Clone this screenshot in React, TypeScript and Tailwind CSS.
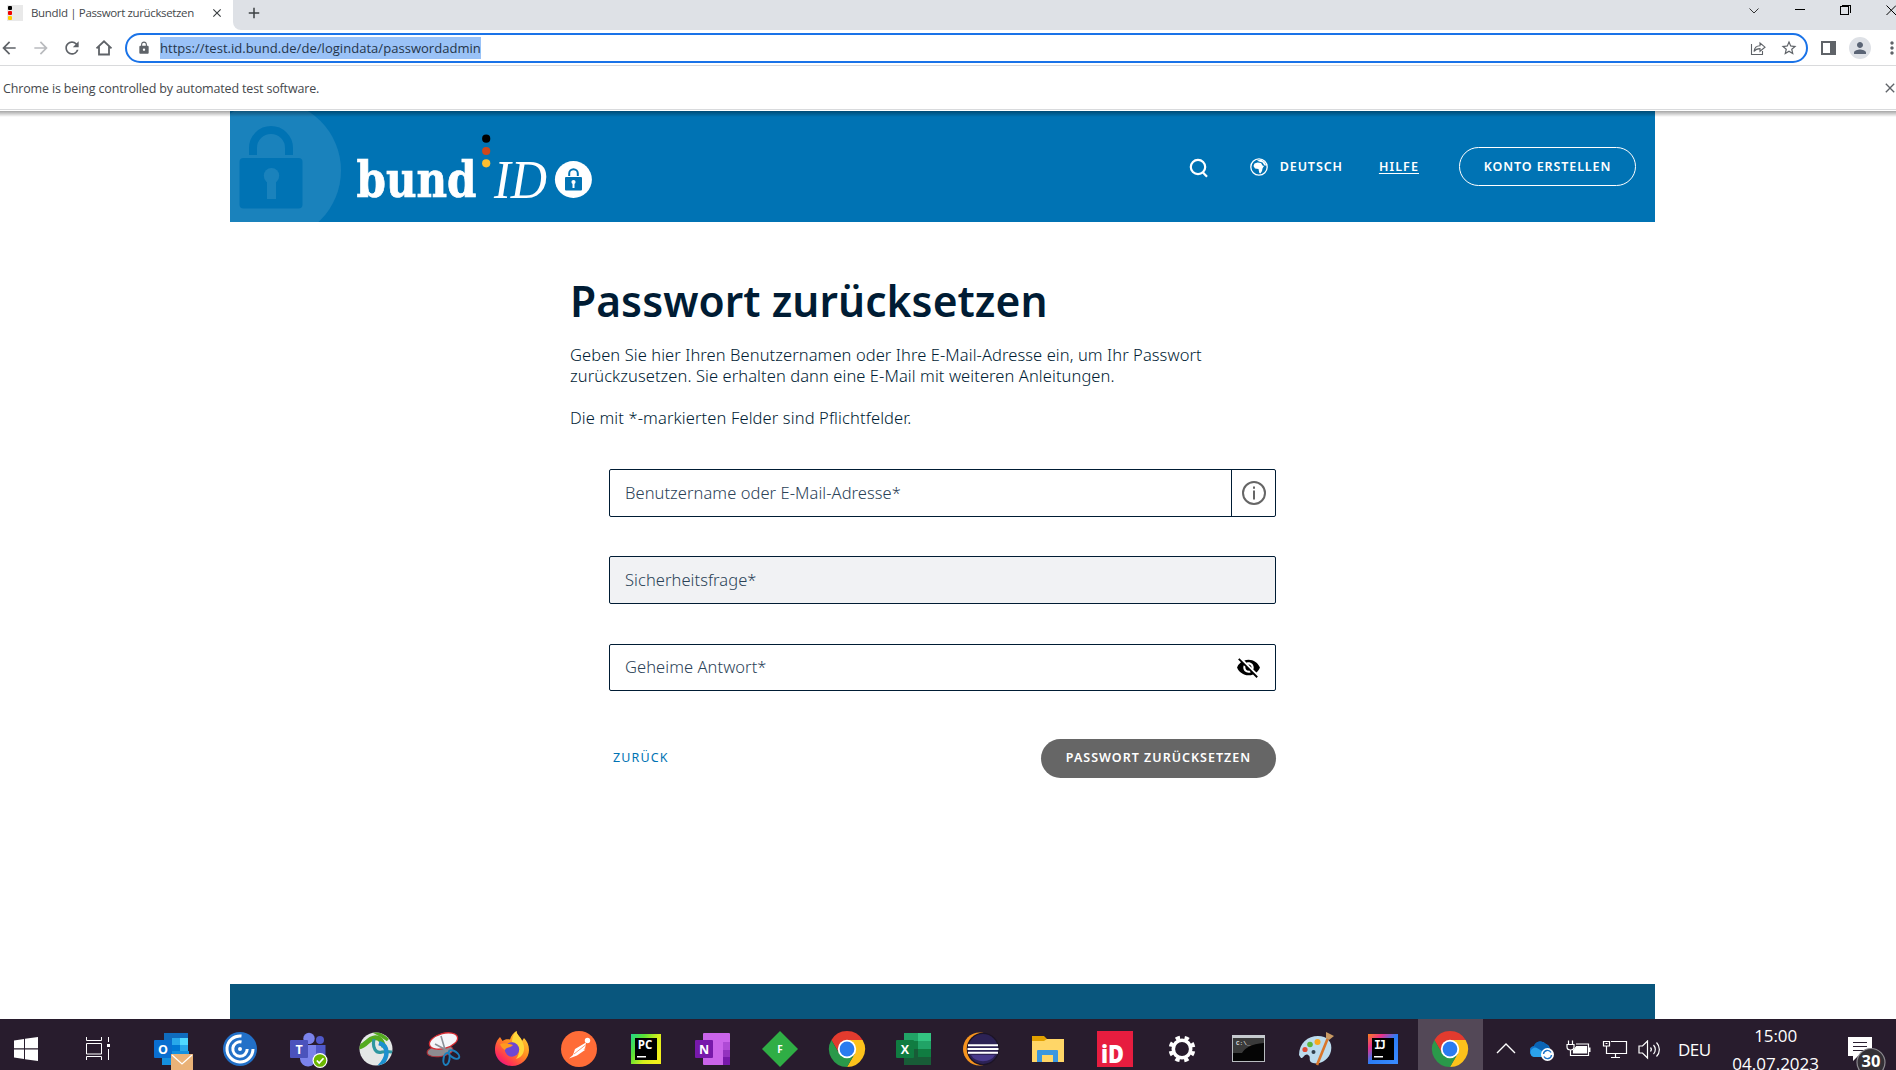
import type { ReactNode } from "react";
import {
  MdArrowBack,
  MdArrowForward,
  MdRefresh,
  MdLock,
  MdStarBorder,
  MdVisibilityOff,
  MdPerson,
  MdClose,
  MdAdd,
  MdMoreVert,
} from "react-icons/md";

function TabStrip() {
  return (
    <div className="flex h-[30px] shrink-0">
      <div className="flex w-[233px] items-center pb-1">
        <svg className="ml-[7px]" width="16" height="16" viewBox="0 0 16 16">
          <rect width="16" height="16" fill="#e9e9e9" />
          <rect x="1" y="1" width="4" height="4" rx="1" fill="#000" />
          <rect x="1" y="6" width="4" height="4" rx="1" fill="#f00000" />
          <rect x="1" y="11" width="4" height="4" rx="1" fill="#fc0" />
        </svg>
        <span className="ml-2 w-[164px] text-[11.5px] tracking-[-0.36px] whitespace-nowrap text-[#45484c]">
          BundId | Passwort zurücksetzen
        </span>
        <MdClose className="ml-[15px] text-[#3c4043]" size={14} />
      </div>
      <div className="flex flex-1 items-center justify-between rounded-bl-lg bg-[#dee1e6] pb-1">
        <MdAdd className="ml-[12px] text-[#3c4043]" size={18} />
        <svg width="150" height="20" viewBox="0 0 150 20" fill="none" stroke="#000" shapeRendering="crispEdges">
          <path d="M3.5 5.5 L8 10 L12.5 5.5" strokeWidth="1" shapeRendering="auto" stroke="#333" />
          <path d="M49 6.5 H59" />
          <rect x="94.5" y="3.5" width="8" height="8" />
          <path d="M96 2.5 H104.5 V10" />
          <path d="M140.500 2.500 L150 12 M140.500 12 L150 2.500" shapeRendering="auto" />
        </svg>
      </div>
    </div>
  );
}

function Toolbar() {
  return (
    <div className="flex h-9 shrink-0 items-center border-b border-[#d9dadc] pt-px text-[#5f6368]">
      <MdArrowBack size={20} className="-ml-[1px] shrink-0" />
      <MdArrowForward size={20} className="ml-[12px] shrink-0 text-[#b9bbbe]" />
      <MdRefresh size={20} className="ml-[11px] shrink-0" />
      <svg className="ml-[13px] shrink-0" width="18" height="18" viewBox="0 0 18 18" fill="none" stroke="currentColor" strokeWidth="1.8">
        <path d="M1.500 9.300 L9 2.300 L16.500 9.300 M4 7.500 V15.500 H14 V7.500" />
      </svg>
      <div className="ml-[12px] flex h-[30px] w-[1683px] shrink-0 items-center rounded-full border-2 border-[#1a73e8] bg-white">
        <MdLock size={14} className="ml-[10px]" />
        <span className="ml-[9px] h-[22px] w-[321px] bg-[#9ac2f7] text-[13px] leading-[22px] tracking-[0.04px] whitespace-nowrap text-[#24354a]">
          https://test.id.bund.de/de/logindata/passwordadmin
        </span>
        <div className="flex-1" />
        <svg width="16" height="16" viewBox="0 0 16 16" fill="none" stroke="currentColor" strokeWidth="1.1">
          <path d="M1.500 4 V14.500 H12.500 V11" />
          <path d="M4 11.500 C4.500 7.500 6.500 5.800 10 5.800 V3 L15 7.200 L10 11.300 V8.600 C7 8.600 5.300 9.500 4 11.500 Z" />
        </svg>
        <MdStarBorder size={18} className="mr-[8px] ml-[14px]" />
      </div>
      <svg className="ml-[13px] shrink-0" width="15" height="14" viewBox="0 0 15 14">
        <rect x="1" y="1" width="13" height="12" fill="none" stroke="currentColor" strokeWidth="2" />
        <rect x="9" y="2" width="4" height="10" fill="currentColor" />
      </svg>
      <div className="ml-[13px] flex size-[22px] shrink-0 items-center justify-center rounded-full bg-[#dee1e6]">
        <MdPerson size={18} className="text-[#5a6475]" />
      </div>
      <MdMoreVert size={20} className="ml-[11px] shrink-0" />
    </div>
  );
}

function InfoBar() {
  return (
    <div className="mb-px flex h-[44px] shrink-0 items-center justify-between border-b border-[#d9dadc] pl-[3px]">
      <span className="pt-[3px] text-[12.5px] tracking-[-0.15px] text-[#45484c]">
        Chrome is being controlled by automated test software.
      </span>
      <MdClose size={16} className="-mr-[2px] text-[#5f6368]" />
    </div>
  );
}

function Logo() {
  return (
    <svg width="400" height="111" viewBox="0 0 400 111" className="block">
      <circle cx="41" cy="59.500" r="70" fill="#1a82bc" />
      <path d="M23 44 V37 a18 18 0 0 1 36 0 V44" fill="none" stroke="#0073b4" strokeWidth="8" />
      <rect x="9.500" y="47" width="63" height="50.500" rx="4" fill="#0073b4" />
      <circle cx="41.500" cy="64.700" r="7.700" fill="#1a82bc" />
      <rect x="37" y="68" width="9" height="20" fill="#1a82bc" />
      <text
        x="126.500"
        y="86"
        fontSize="50.5"
        fontWeight="700"
        fontStretch="condensed"
        fontFamily="'DejaVu Serif Condensed', 'DejaVu Serif', serif"
        textLength="120"
        lengthAdjust="spacingAndGlyphs"
        fill="#fff"
        stroke="#fff"
        strokeWidth="0.7"
      >
        bund
      </text>
      <text
        x="264"
        y="86.500"
        fontSize="54"
        fontWeight="400"
        fontStyle="italic"
        fontFamily="'Liberation Serif', serif"
        textLength="53"
        lengthAdjust="spacingAndGlyphs"
        fill="#fff"
      >
        ID
      </text>
      <circle cx="256.200" cy="27.700" r="4.100" fill="#000" />
      <circle cx="256.200" cy="40" r="4.100" fill="#d0471a" />
      <circle cx="256.200" cy="52.300" r="4.100" fill="#fdbf32" />
      <circle cx="343.400" cy="68.500" r="18.500" fill="#fff" />
      <path d="M339.200 65 V62.500 a4.300 4.300 0 0 1 8.600 0 V65" fill="none" stroke="#0073b4" strokeWidth="2" />
      <rect x="335" y="66" width="17" height="13.500" rx="1" fill="#0073b4" />
      <circle cx="343.500" cy="71" r="2.100" fill="#fff" />
      <rect x="342.500" y="71" width="2" height="6" fill="#fff" />
    </svg>
  );
}

function SiteHeader() {
  return (
    <header className="ml-[230px] flex h-[111px] w-[1425px] shrink-0 bg-[#0073b4] font-['Noto_Sans',sans-serif] text-[12.5px] font-semibold text-white">
      <Logo />
      <div className="flex flex-1 items-center justify-end pr-[19px]">
        <svg width="20" height="20" viewBox="0 0 20 20" fill="none" stroke="#fff" strokeWidth="2.2" className="mt-[3px] mr-[41px]">
          <circle cx="9" cy="9" r="7.200" />
          <path d="M13.500 14 L18 18.800" />
        </svg>
        <svg width="18" height="18" viewBox="0 0 18 18" className="mr-[12px]">
          <circle cx="9" cy="9" r="8.200" fill="none" stroke="#fff" strokeWidth="1.3" />
          <path d="M4.500 5.500 L7.500 4.500 L11 5 L12.500 7.500 L14 8 L12.500 10.500 L12 13 L10.500 15.500 L9.300 15 L8.500 11 L5 10.500 L3.500 8 Z" fill="#fff" />
          <path d="M7 2.500 L11 1.500 L14.500 4 L16.300 7.500 L14.500 7.500 L12.500 4.500 L9 3.600 Z" fill="#fff" />
        </svg>
        <span className="mt-[2px] mr-[36px] tracking-[0.9px]">DEUTSCH</span>
        <span className="mt-[2px] mr-[40px] tracking-[1.1px] underline underline-offset-2">HILFE</span>
        <button className="flex h-[39px] w-[177px] items-center justify-center rounded-full border border-white">
          <span className="mt-[2px] tracking-[0.9px]">KONTO ERSTELLEN</span>
        </button>
      </div>
    </header>
  );
}

function Field({ label, className, children }: { label: string; className: string; children?: ReactNode }) {
  return (
    <div className={"flex h-12 w-[667px] items-center justify-between rounded-[2px] border border-[#001c34] " + className}>
      <span className="ml-[15px] text-[16.5px] font-light tracking-[0.06px] text-[#2b4257]">{label}</span>
      {children}
    </div>
  );
}

function PasswordForm() {
  return (
    <main className="ml-[570px] flex w-[706px] flex-1 flex-col font-['Noto_Sans',sans-serif] text-[#001c34]">
      <h1 className="mt-[49px] h-[60px] text-[42.5px] leading-[60px] font-semibold tracking-[0.06px] whitespace-nowrap">
        Passwort zurücksetzen
      </h1>
      <p className="mt-[13px] text-[16.5px] leading-[21px] font-light tracking-[0.08px]">
        Geben Sie hier Ihren Benutzernamen oder Ihre E-Mail-Adresse ein, um Ihr Passwort
        <br />
        zurückzusetzen. Sie erhalten dann eine E-Mail mit weiteren Anleitungen.
      </p>
      <p className="mt-[21px] text-[16.5px] leading-[21px] font-light tracking-[0.12px]">
        Die mit *-markierten Felder sind Pflichtfelder.
      </p>
      <div className="mt-[41px] ml-[39px] flex flex-col">
        <Field label="Benutzername oder E-Mail-Adresse*" className="bg-white">
          <div className="flex h-full w-[44px] items-center justify-center border-l border-[#001c34]">
            <svg width="24" height="24" viewBox="0 0 24 24" fill="none" stroke="#666" strokeWidth="2">
              <circle cx="12" cy="12" r="11" />
              <path d="M12 9.500 V18.500 M12 5.500 V7.800" />
            </svg>
          </div>
        </Field>
        <Field label="Sicherheitsfrage*" className="mt-[39px] bg-[#f1f2f4]" />
        <Field label="Geheime Antwort*" className="mt-[40px] h-[47px] bg-white">
          <MdVisibilityOff size={25} className="mr-[14px] text-black" />
        </Field>
        <div className="mt-[48px] flex items-center justify-between text-[12.5px]">
          <span className="ml-1 tracking-[1.15px] text-[#0073b4]">ZURÜCK</span>
          <button className="flex h-[39px] w-[235px] items-center justify-center rounded-full bg-[#666] font-semibold text-white">
            <span className="tracking-[1px]">PASSWORT ZURÜCKSETZEN</span>
          </button>
        </div>
      </div>
    </main>
  );
}

function Chrome() {
  return (
    <g>
      <path d="M2.400 9 A18 18 0 0 1 33.600 9 L18 9 L10.200 22.500 Z" fill="#e33b2e" />
      <path d="M33.600 9 A18 18 0 0 1 18 36 L25.800 22.500 L18 9 Z" fill="#fcc21b" />
      <path d="M18 36 A18 18 0 0 1 2.400 9 L10.200 22.500 L25.800 22.500 Z" fill="#2a994a" />
      <circle cx="18" cy="18" r="9.200" fill="#fff" />
      <circle cx="18" cy="18" r="7.400" fill="#2a7bf0" />
    </g>
  );
}

const label = { fontFamily: "'Open Sans', sans-serif", fontWeight: 700, fill: "#fff", textAnchor: "middle" as const };

const apps: { name: string; art: ReactNode }[] = [
  {
    name: "Outlook",
    art: (
      <g>
        <rect x="10" y="2" width="24" height="18" fill="#0f6cbd" />
        <rect x="18" y="7" width="8" height="7" fill="#28a8ea" />
        <rect x="26" y="7" width="8" height="7" fill="#50d9ff" />
        <rect x="18" y="14" width="8" height="7" fill="#0078d4" />
        <rect x="26" y="14" width="8" height="7" fill="#28a8ea" />
        <path d="M8 20 H35 V34 H8 Z" fill="#1490df" />
        <rect x="0" y="9" width="18" height="18" rx="1" fill="#0a6fd0" />
        <text {...label} x="9" y="22.500" fontSize="12.5">O</text>
        <rect x="17" y="23" width="22" height="16" fill="#eab277" />
        <path d="M18 24 L28 33 L38 24" fill="none" stroke="#fff" strokeWidth="1.3" />
      </g>
    ),
  },
  {
    name: "Workspace",
    art: (
      <g fill="none" stroke="#fff" strokeWidth="3">
        <circle cx="18" cy="18" r="17" fill="#2270c8" stroke="none" />
        <path d="M19.500 5 A13 13 0 1 0 31 18" />
        <path d="M19.500 11 A7.200 7.200 0 1 0 25.200 18" />
        <circle cx="18" cy="18" r="2" fill="#fff" stroke="none" />
      </g>
    ),
  },
  {
    name: "Teams",
    art: (
      <g>
        <circle cx="19" cy="7.500" r="5.700" fill="#7b83eb" />
        <circle cx="30" cy="9" r="4" fill="#5059c9" />
        <path d="M24 14 H35.500 V24 a6 6 0 0 1 -11.500 3 Z" fill="#5059c9" />
        <path d="M10 14 H26 V27 a8 8 0 0 1 -16 1 Z" fill="#7b83eb" />
        <rect x="0" y="9" width="18" height="18" rx="1" fill="#4b53bc" />
        <text {...label} x="9" y="22.500" fontSize="12.5">T</text>
        <circle cx="30" cy="29.500" r="7.500" fill="#fff" />
        <circle cx="30" cy="29.500" r="6.300" fill="#6bb700" />
        <path d="M26.800 29.500 L29.200 32 L33.500 27.200" fill="none" stroke="#fff" strokeWidth="1.7" />
      </g>
    ),
  },
  {
    name: "AnyConnect",
    art: (
      <g fill="none">
        <clipPath id="globe">
          <circle cx="18" cy="18" r="16.500" />
        </clipPath>
        <circle cx="18" cy="18" r="16.500" fill="#e4e7e6" />
        <g clipPath="url(#globe)">
          <path d="M0 16 C9 15 9 8 16 7 C22 6 24 10 26 16" stroke="#54ab20" strokeWidth="5" />
          <path d="M15 0 C19 2 24 4 30 9" stroke="#54ab20" strokeWidth="3.5" />
          <path d="M16 8 C14 17 18 23 24 21 C28 20 31 21 36 21" stroke="#2e97a0" strokeWidth="3.2" />
          <path d="M21 12 C31 15 31 26 21 36" stroke="#1c90cf" strokeWidth="4.5" />
        </g>
      </g>
    ),
  },
  {
    name: "Snipping Tool",
    art: (
      <g fill="none">
        <ellipse cx="14" cy="20" rx="13" ry="5.500" transform="rotate(-8 14 20)" fill="#8d8b90" stroke="#b32c33" strokeWidth="1" />
        <ellipse cx="17.500" cy="10" rx="14.500" ry="7.500" transform="rotate(-16 17.500 10)" fill="#f4f6f9" stroke="#d62c32" strokeWidth="1.3" />
        <path d="M15 5 L20 22 M9 13 L22 20" stroke="#8b9097" strokeWidth="1.6" />
        <ellipse cx="20.500" cy="28" rx="3" ry="6" transform="rotate(10 20.500 28)" stroke="#1c7fbd" strokeWidth="2" />
        <ellipse cx="28" cy="23.500" rx="3.200" ry="6" transform="rotate(-55 28 23.500)" stroke="#1c7fbd" strokeWidth="2" />
      </g>
    ),
  },
  {
    name: "Firefox",
    art: (
      <g>
        <path d="M6 6 L8.500 10 C11 8 13 8 16 8.500 C17 5 19 2 22.500 0 C22.500 4 27 6 28 10 L30 7 C33 10 35 14 35 19 A17 16 0 0 1 1 19 C1 13 3 9 6 6 Z" fill="url(#fox)" />
        <path d="M22.500 0 C22.500 4 27 6 29 12 C32 19 29 26 22 28 C27 22 26 14 18 11 C18 6 20 2 22.500 0 Z" fill="#ffd83a" />
        <circle cx="18" cy="18.500" r="7.200" fill="#6d48d4" />
        <path d="M6 13 C10 11 14 13 19 14 C17 17 12 16 11 19 C9 18 7 16 6 13 Z" fill="#ff9a1f" />
      </g>
    ),
  },
  {
    name: "Postman",
    art: (
      <g>
        <circle cx="18" cy="18" r="18" fill="#ff6c37" />
        <circle cx="26.500" cy="9.500" r="2.700" fill="#fff" />
        <path d="M25 11.500 L14 18 L12 24 L8 27.500 L16 24.500 L24 19 Z" fill="#fff" />
        <path d="M24.500 14 L13 23 M27 13 L23 19" stroke="#ff6c37" strokeWidth="0.7" />
      </g>
    ),
  },
  {
    name: "PyCharm",
    art: (
      <g>
        <rect x="3" y="3" width="30" height="30" fill="url(#pc)" />
        <rect x="7" y="7" width="22" height="22" fill="#000" />
        <text {...label} x="17" y="18" fontSize="11.5">PC</text>
        <rect x="9" y="25" width="9" height="1.500" fill="#fff" />
      </g>
    ),
  },
  {
    name: "OneNote",
    art: (
      <g>
        <rect x="8" y="2" width="27" height="32" rx="1" fill="#ca64ea" />
        <rect x="28" y="11" width="7" height="8" fill="#ae4bd5" />
        <rect x="28" y="19" width="7" height="7" fill="#9332bf" />
        <path d="M28 26 H35 V34 H28 Z" fill="#7719aa" />
        <rect x="0" y="9" width="18" height="18" rx="1" fill="#7719aa" />
        <text {...label} x="9" y="22.500" fontSize="12.5">N</text>
      </g>
    ),
  },
  {
    name: "F",
    art: (
      <g>
        <path d="M18 0 L36 18 L18 36 L0 18 Z" fill="#2fae45" />
        <text {...label} x="18" y="21.500" fontSize="10">F</text>
      </g>
    ),
  },
  { name: "Chrome", art: <Chrome /> },
  {
    name: "Excel",
    art: (
      <g>
        <rect x="8" y="2" width="14" height="8" fill="#21a366" />
        <rect x="22" y="2" width="13" height="8" fill="#33c481" />
        <rect x="8" y="10" width="14" height="8" fill="#107c41" />
        <rect x="22" y="10" width="13" height="8" fill="#21a366" />
        <rect x="22" y="18" width="13" height="8" fill="#107c41" />
        <path d="M8 18 H22 V26 H35 V34 H8 Z" fill="#185c37" />
        <rect x="0" y="9" width="18" height="18" rx="1" fill="#107c41" />
        <text {...label} x="9" y="22.500" fontSize="12.5">X</text>
      </g>
    ),
  },
  {
    name: "Eclipse",
    art: (
      <g>
        <circle cx="16.500" cy="18" r="16.500" fill="#f7941e" />
        <circle cx="20" cy="18" r="16.300" fill="#1c1426" />
        <circle cx="20" cy="18" r="15" fill="#2c2255" />
        <path d="M8 24 H32 A13 10 0 0 1 8 24 Z" fill="#493a8c" />
        <path d="M5 14.200 H35 M4.500 18 H35.500 M5 21.800 H35" stroke="#fff" strokeWidth="2" />
      </g>
    ),
  },
  {
    name: "Explorer",
    art: (
      <g>
        <path d="M2 5 H14 L17 8 V14 H2 Z" fill="#e2a100" />
        <path d="M2 10 H14 L17 8 H34 V31 H2 Z" fill="#ffd667" />
        <path d="M7 31 V20 a1 1 0 0 1 1 -1 H27 a1 1 0 0 1 1 1 V31 H23 V24 H12 V31 Z" fill="#3a97df" />
      </g>
    ),
  },
  {
    name: "iD",
    art: (
      <g>
        <rect width="36" height="36" fill="#e71d3f" />
        <text {...label} x="15.500" y="32" fontSize="24" fontWeight={800} textLength="23" lengthAdjust="spacingAndGlyphs">
          iD
        </text>
      </g>
    ),
  },
  {
    name: "Settings",
    art: (
      <g fill="none" stroke="#fff">
        <circle cx="18" cy="18" r="8.700" strokeWidth="3.6" />
        <circle cx="18" cy="18" r="11.600" strokeWidth="3.6" strokeDasharray="4.4 4.71" strokeDashoffset="-2.3" />
      </g>
    ),
  },
  {
    name: "Command Prompt",
    art: (
      <g>
        <rect x="1.500" y="4.500" width="32" height="26" fill="#050505" stroke="#b9bcc0" />
        <rect x="1" y="4" width="33" height="3" fill="#c6cacf" />
        <path d="M2 7 H33 V12 C20 13 14 17 11 22 H2 Z" fill="#3a3a3a" />
        <text x="5" y="14" fontSize="6" fontFamily="'Liberation Mono', monospace" fontWeight={700} fill="#ddd">
          C:\_
        </text>
      </g>
    ),
  },
  {
    name: "Paint",
    art: (
      <g>
        <path d="M1 24 C1 12 10 5 20 5 C29 5 35 11 33 20 C31 29 22 34 15 32 C9 30 14 26 10 24 C7 22 5 28 3 27 Z" fill="#bcdcee" />
        <circle cx="7" cy="18.500" r="2.600" fill="#dd4b33" />
        <circle cx="12" cy="13.500" r="2.800" fill="#5cb63c" />
        <circle cx="19.500" cy="11" r="3" fill="#f8a91c" />
        <circle cx="15.500" cy="21" r="2" fill="#31404e" />
        <path d="M29.500 8 L19 34" stroke="#d9762b" strokeWidth="2.6" />
        <path d="M28 1 L36 5 L31 9 L28 7 Z" fill="#c99a62" />
      </g>
    ),
  },
  {
    name: "IntelliJ",
    art: (
      <g>
        <rect x="3" y="3" width="30" height="30" fill="url(#ij)" />
        <rect x="7" y="7" width="22" height="22" fill="#000" />
        <text
          x="15"
          y="18"
          fontSize="11.5"
          textAnchor="middle"
          fontFamily="'DejaVu Sans Mono', monospace"
          fontWeight={700}
          fill="#fff"
          textLength="12"
        >
          IJ
        </text>
        <rect x="9" y="25" width="9" height="1.500" fill="#fff" />
      </g>
    ),
  },
  { name: "Chrome active", art: <Chrome /> },
];

function cellClass(i: number) {
  if (i < 6) return "w-[68px] pl-[16px]";
  if (i < 19) return "w-[67px] pl-[15px]";
  return "mx-px w-[65px] bg-[#534857] pl-[14px]";
}

function Tray() {
  return (
    <div className="flex h-full items-start text-white">
      <svg width="20" height="12" viewBox="0 0 20 12" className="mt-[24px] ml-[12px]" fill="none" stroke="#fff" strokeWidth="1.4">
        <path d="M1 10 L10 1 L19 10" />
      </svg>
      <svg width="24" height="20" viewBox="0 0 24 20" className="mt-[22px] ml-[14px]">
        <path d="M5 15 A5 5 0 0 1 4 5 A7 7 0 0 1 16 3 A6 6 0 0 1 20 8 L17 15 Z" fill="#1278d0" />
        <path d="M1 14 C-1 8 4 6 7 7 L17 12 L12 16 H5 C3 16 1.500 15.500 1 14 Z" fill="#2ba3ec" />
        <path d="M4 5 A7 7 0 0 1 16 3 A6 6 0 0 1 19 7 L12 10 Z" fill="#0a64b5" />
        <circle cx="17.500" cy="13.500" r="6.500" fill="#fff" />
        <path d="M13.500 13 A4 4 0 0 1 21 11.500 M21.500 14 A4 4 0 0 1 14 15.500" fill="none" stroke="#1b74c9" strokeWidth="1.4" />
      </svg>
      <svg width="25" height="18" viewBox="0 0 25 18" className="mt-[21px] ml-[12px]" fill="none" stroke="#fff" strokeWidth="1.2">
        <path d="M2.500 0.500 V4 M6.500 0.500 V4 M1 4.500 H8 V7 a3.500 3 0 0 1 -7 0 Z M4.500 10 V15.500 H22.500 V4 H10" />
        <path d="M7.500 13 V10.500 L10.500 6.500 H20.500 V13 Z" fill="#fff" />
        <path d="M23.500 7.500 V12" strokeWidth="2" />
      </svg>
      <svg width="26" height="20" viewBox="0 0 26 20" className="mt-[21px] ml-[11px]" fill="none" stroke="#fff" strokeWidth="1.2">
        <path d="M9 1.500 H24.500 V13.500 H4.500 V8 M1.500 1.500 H7.500 V6 H1.500 Z M4.500 6 V8 M13.500 13.500 V17.500 M9 17.500 H18 M3.500 3.500 H5.500" />
      </svg>
      <svg width="24" height="20" viewBox="0 0 24 20" className="mt-[21px] ml-[10px]" fill="none" stroke="#fff" strokeWidth="1.2">
        <path d="M1 6 H4.500 L9.500 1 V18 L4.500 13 H1 Z" />
        <path d="M12.500 7.500 a3 3 0 0 1 0 4 M15.500 5 a6.500 6.500 0 0 1 0 9 M18.500 2.500 a10 10 0 0 1 0 14" />
      </svg>
      <span className="mt-[19px] ml-[16px] text-[17px] leading-6 tracking-[-0.5px]">DEU</span>
      <div className="mt-[3px] ml-[21px] flex w-[88px] flex-col items-center text-[17px] leading-[28px]">
        <span className="tracking-[-0.1px]">15:00</span>
        <span>04.07.2023</span>
      </div>
      <svg width="42" height="33" viewBox="0 0 42 33" className="mt-[18px] ml-[26px] overflow-visible">
        <path d="M2 0 H26 V19 H12 L7 24 V19 H2 Z" fill="#fff" />
        <path d="M7 5.500 H21 M7 9.500 H21 M7 13.500 H21" stroke="#2a1f30" strokeWidth="1.2" />
        <circle cx="25" cy="25.500" r="14" fill="#343036" stroke="#8d8a90" strokeWidth="1.2" />
        <text {...label} x="25" y="29.500" fontSize="16.5">30</text>
      </svg>
    </div>
  );
}

function Taskbar() {
  return (
    <div className="flex h-[51px] shrink-0 overflow-hidden bg-[#281c2d]">
      <svg width="24" height="24" viewBox="0 0 24 24" className="mt-[18px] ml-[14px] shrink-0" fill="#fff">
        <path d="M0 3.400 L10 2 V11.300 H0 Z M11 1.800 L24 0 V11.300 H11 Z M0 12.500 H10 V22 L0 20.600 Z M11 12.500 H24 V24 L11 22.200 Z" />
      </svg>
      <svg width="25" height="24" viewBox="0 0 25 24" className="mt-[18px] mr-[27px] ml-[48px] shrink-0" fill="none" stroke="#fff">
        <path d="M0.500 0 V3.500 H15.500 V0 M0.500 6.500 H15.500 V17 H0.500 Z M0.500 23 V19.500 H15.500 V23 M22.500 0 V5 M22.500 12 V23" />
        <rect x="21.500" y="7.500" width="2" height="2" fill="#fff" />
      </svg>
      {apps.map((app, i) => (
        <div key={app.name} className={"shrink-0 pt-3 " + cellClass(i)}>
          <svg width="36" height="36" viewBox="0 0 36 36" className="block overflow-visible">
            {app.art}
          </svg>
        </div>
      ))}
      <Tray />
    </div>
  );
}

export default function App() {
  return (
    <div className="flex h-[1070px] w-[1896px] flex-col overflow-hidden bg-white font-['Open_Sans',sans-serif]">
      <svg width="0" height="0" className="absolute">
        <defs>
          <linearGradient id="fox" x1="1" y1="0" x2="0.2" y2="1">
            <stop offset="0" stopColor="#ffe23c" />
            <stop offset="0.5" stopColor="#ff8a1f" />
            <stop offset="0.85" stopColor="#ff2f57" />
            <stop offset="1" stopColor="#e3148b" />
          </linearGradient>
          <linearGradient id="pc" x1="0" y1="0" x2="1" y2="0.6">
            <stop offset="0" stopColor="#21d789" />
            <stop offset="0.35" stopColor="#5be234" />
            <stop offset="0.7" stopColor="#d5ee1c" />
            <stop offset="1" stopColor="#f3f01c" />
          </linearGradient>
          <linearGradient id="ij" x1="0" y1="0" x2="1" y2="1">
            <stop offset="0" stopColor="#fc801d" />
            <stop offset="0.25" stopColor="#e8318c" />
            <stop offset="0.5" stopColor="#2a7df6" />
            <stop offset="1" stopColor="#3b8cff" />
          </linearGradient>
        </defs>
      </svg>
      <TabStrip />
      <Toolbar />
      <InfoBar />
      <div className="relative flex flex-1 flex-col">
        <div className="absolute inset-x-0 top-0 h-[6px] bg-gradient-to-b from-black/35 to-transparent" />
        <SiteHeader />
        <PasswordForm />
        <footer className="ml-[230px] h-[35px] w-[1425px] shrink-0 bg-[#09567d]" />
      </div>
      <Taskbar />
    </div>
  );
}
